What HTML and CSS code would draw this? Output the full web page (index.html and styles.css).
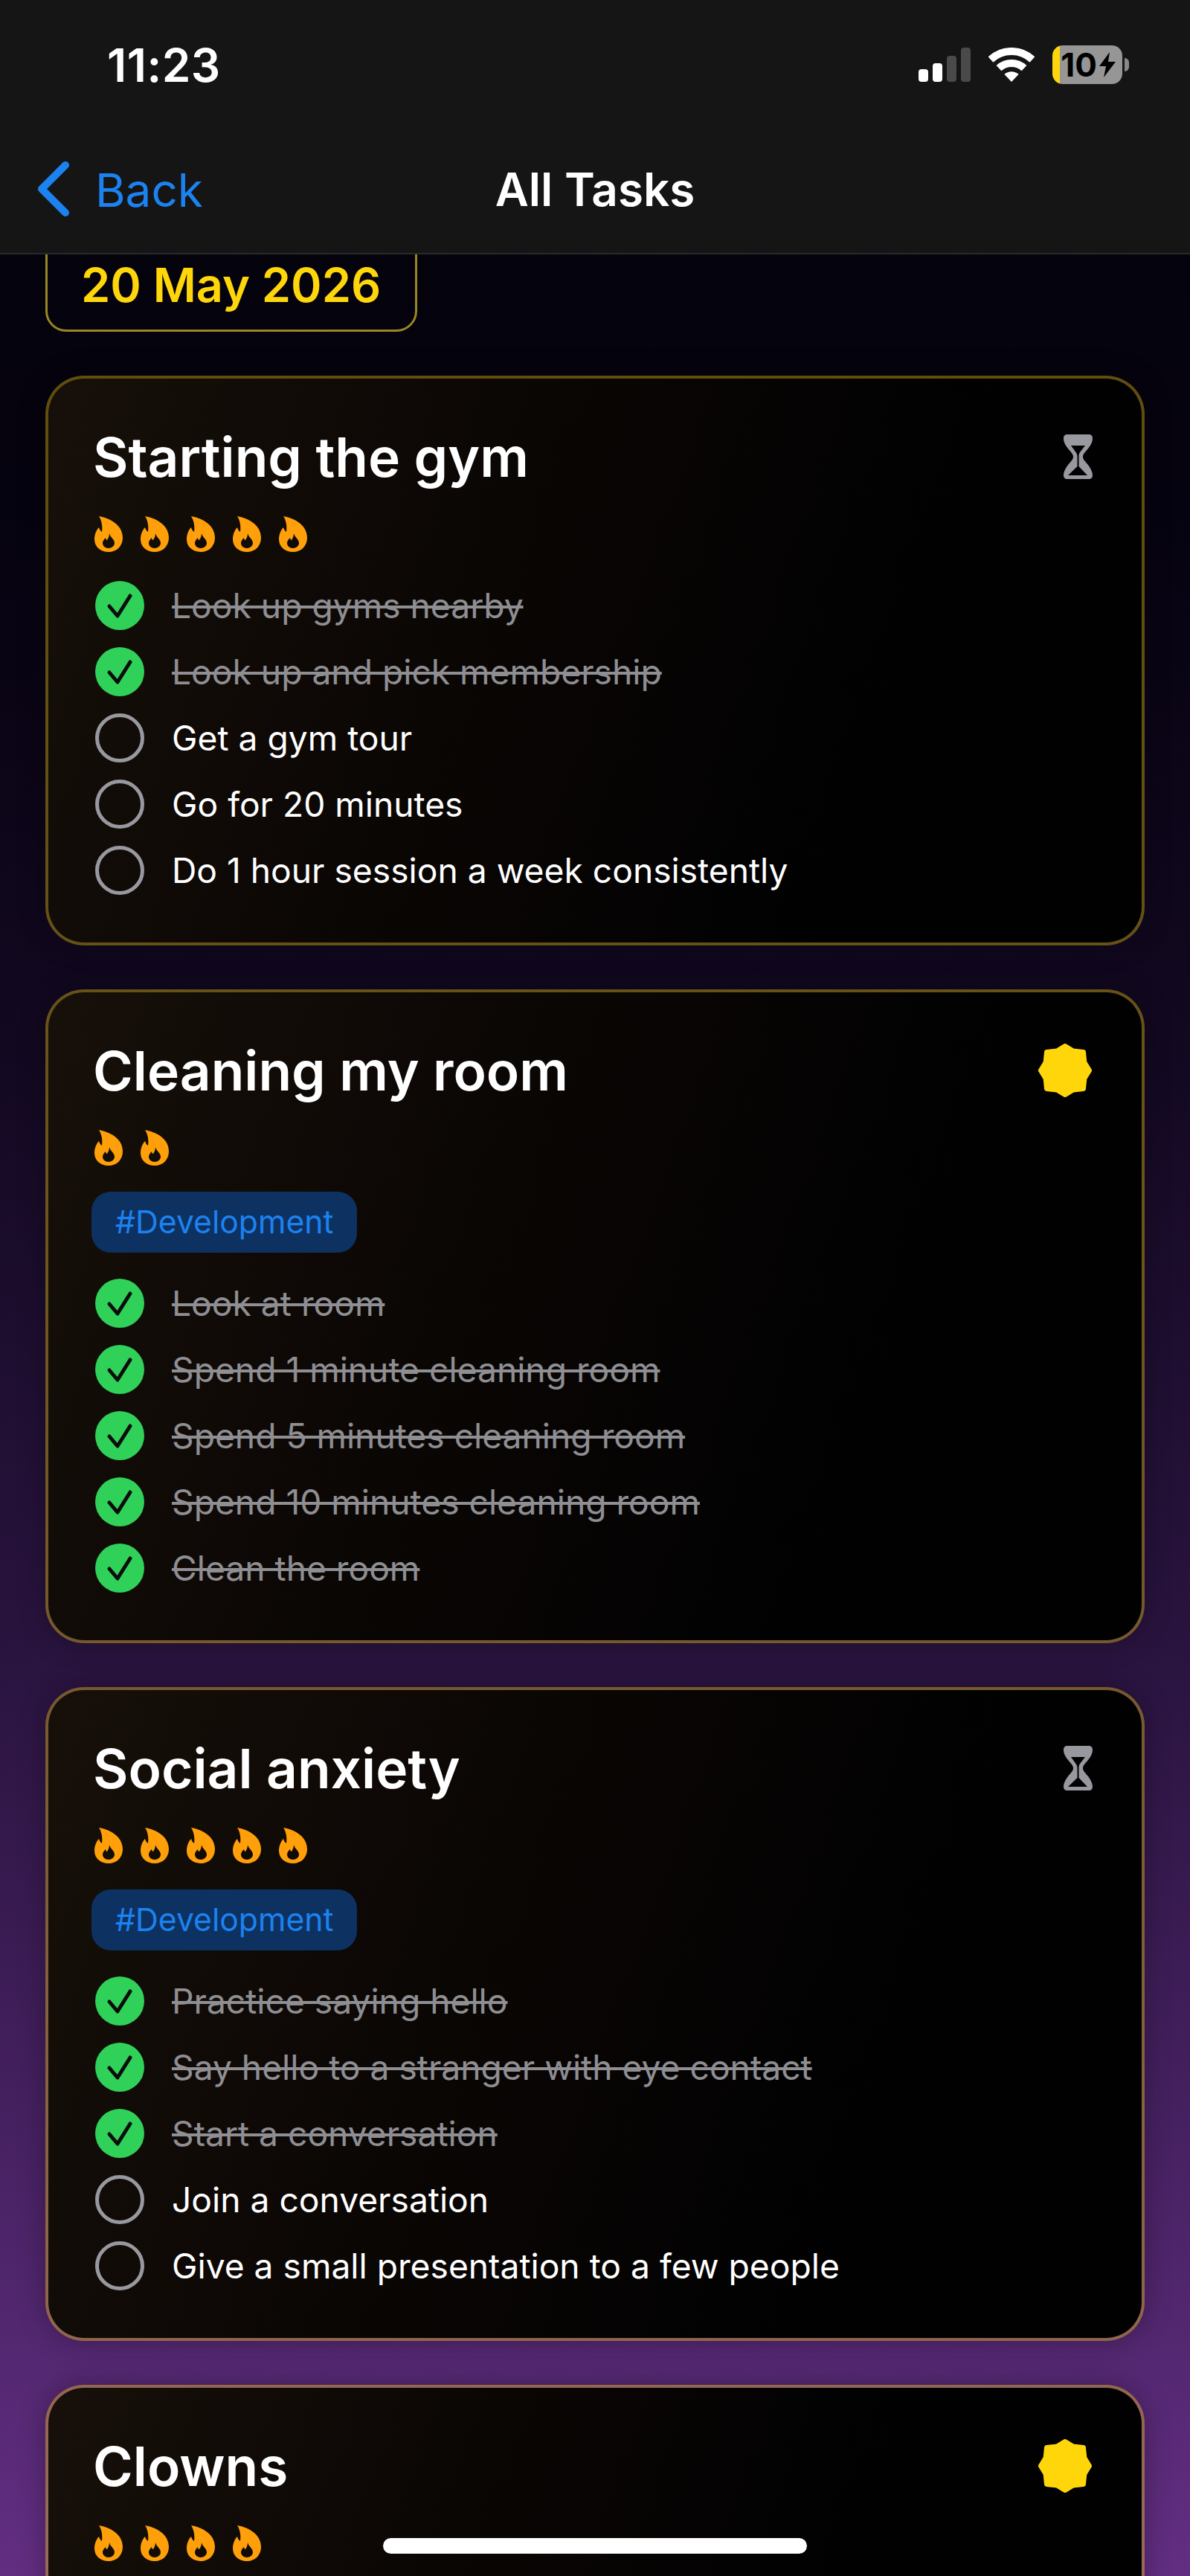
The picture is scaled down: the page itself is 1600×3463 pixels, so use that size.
FILE: index.html
```html
<!DOCTYPE html>
<html lang="en">
<head>
  <meta charset="UTF-8">
  <title>All Tasks</title>
  <link rel="stylesheet" href="styles.css">
</head>
<body>
  <svg class="defs" width="0" height="0">
    <symbol id="flame" viewBox="0 0 38 48">
      <path fill-rule="evenodd" d="M6 0C18 2 38 10 38 29C38 40 30 48 19 48C8 48 0 41 0 31C0 24 3 18 6 15C7 18 8 20 10 21C11 14 10 6 6 0ZM20 23C20 27 18.500 30 17 32C16 32 15 31 15 29C13 31 11 33 11 36C11 40 14.500 43 19 43C23 43 27 40 27 36C27 31 21 28 20 23Z"/>
    </symbol>
    <symbol id="hourglass" viewBox="0 0 39 60">
      <path fill-rule="evenodd" d="M5 0H34C37 0 39 2 39 5C39 11 36 15 33 19C30 23 26 26 26 30C26 34 30 37 33 41C36 45 39 50 39 55C39 58 37 60 34 60H5C2 60 0 58 0 55C0 50 3 45 6 41C9 37 13 34 13 30C13 26 9 23 6 19C3 15 0 11 0 5C0 2 2 0 5 0ZM10 15H29L22 24C20.500 26 20.500 28 20.500 30V43L32 55H6L18.500 43V30C18.500 28 18 26 16.500 24Z"/>
    </symbol>
    <symbol id="badge" viewBox="0 0 72 72">
      <polygon stroke-width="7" stroke-linejoin="round" points="36,3.500 46.700,10.100 60.500,11.500 61.900,25.300 68.500,36 61.900,46.700 60.500,60.500 46.700,61.900 36,68.500 25.300,61.900 11.500,60.500 10.100,46.700 3.500,36 10.100,25.300 11.500,11.500 25.300,10.100"/>
    </symbol>
    <symbol id="check" viewBox="0 0 66 66">
      <circle cx="33" cy="33" r="33" fill="#30d158"/>
      <path d="M19 34L30 47L47 20" fill="none" stroke="#0c0c0c" stroke-width="5" stroke-linecap="round" stroke-linejoin="round"/>
    </symbol>
    <symbol id="open" viewBox="0 0 66 66">
      <circle cx="33" cy="33" r="30.500" fill="none" stroke="#98989f" stroke-width="5"/>
    </symbol>
  </svg>

  <header class="top">
    <div class="status">
      <span class="time">11:23</span>
      <div class="status-icons">
        <div class="signal">
          <i class="bar b1"></i>
          <i class="bar b2"></i>
          <i class="bar b3 off"></i>
          <i class="bar b4 off"></i>
        </div>
        <svg class="wifi" width="62" height="46" viewBox="0 0 62 46">
          <path d="M3 16A41 41 0 0 1 59 16M14 27.700A25 25 0 0 1 48 27.700" fill="none" stroke="#fff" stroke-width="10"/>
          <path d="M31 46L21.500 36A14 14 0 0 1 40.500 36Z" fill="#fff"/>
        </svg>
        <div class="battery">
          <div class="battery-body">
            <span>10</span>
            <svg width="24" height="34" viewBox="0 0 24 34">
              <path d="M15 0L1 19H10L7 34L23 13H13Z" fill="#000"/>
            </svg>
          </div>
          <i class="battery-nub"></i>
        </div>
      </div>
    </div>
    <nav class="nav">
      <a class="back">
        <svg width="44" height="74" viewBox="0 0 44 74">
          <path d="M38 5L6 37L38 69" fill="none" stroke="#1c82f0" stroke-width="10" stroke-linecap="round" stroke-linejoin="round"/>
        </svg>
        <span class="back-label">Back</span>
      </a>
      <h1>All Tasks</h1>
    </nav>
  </header>

  <main class="list">
    <div class="date">20 May 2026</div>

    <section class="card">
      <div class="card-head">
        <h2>Starting the gym</h2>
        <svg class="hourglass"><use href="#hourglass"/></svg>
      </div>
      <div class="flames">
        <svg><use href="#flame"/></svg>
        <svg><use href="#flame"/></svg>
        <svg><use href="#flame"/></svg>
        <svg><use href="#flame"/></svg>
        <svg><use href="#flame"/></svg>
      </div>
      <ul class="steps">
        <li class="done"><svg><use href="#check"/></svg><span>Look up gyms nearby</span></li>
        <li class="done"><svg><use href="#check"/></svg><span>Look up and pick membership</span></li>
        <li><svg><use href="#open"/></svg><span>Get a gym tour</span></li>
        <li><svg><use href="#open"/></svg><span>Go for 20 minutes</span></li>
        <li><svg><use href="#open"/></svg><span>Do 1 hour session a week consistently</span></li>
      </ul>
    </section>

    <section class="card">
      <div class="card-head">
        <h2>Cleaning my room</h2>
        <svg class="badge"><use href="#badge"/></svg>
      </div>
      <div class="flames">
        <svg><use href="#flame"/></svg>
        <svg><use href="#flame"/></svg>
      </div>
      <span class="tag">#Development</span>
      <ul class="steps">
        <li class="done"><svg><use href="#check"/></svg><span>Look at room</span></li>
        <li class="done"><svg><use href="#check"/></svg><span>Spend 1 minute cleaning room</span></li>
        <li class="done"><svg><use href="#check"/></svg><span>Spend 5 minutes cleaning room</span></li>
        <li class="done"><svg><use href="#check"/></svg><span>Spend 10 minutes cleaning room</span></li>
        <li class="done"><svg><use href="#check"/></svg><span>Clean the room</span></li>
      </ul>
    </section>

    <section class="card">
      <div class="card-head">
        <h2>Social anxiety</h2>
        <svg class="hourglass"><use href="#hourglass"/></svg>
      </div>
      <div class="flames">
        <svg><use href="#flame"/></svg>
        <svg><use href="#flame"/></svg>
        <svg><use href="#flame"/></svg>
        <svg><use href="#flame"/></svg>
        <svg><use href="#flame"/></svg>
      </div>
      <span class="tag">#Development</span>
      <ul class="steps">
        <li class="done"><svg><use href="#check"/></svg><span>Practice saying hello</span></li>
        <li class="done"><svg><use href="#check"/></svg><span>Say hello to a stranger with eye contact</span></li>
        <li class="done"><svg><use href="#check"/></svg><span>Start a conversation</span></li>
        <li><svg><use href="#open"/></svg><span>Join a conversation</span></li>
        <li><svg><use href="#open"/></svg><span>Give a small presentation to a few people</span></li>
      </ul>
    </section>

    <section class="card">
      <div class="card-head">
        <h2>Clowns</h2>
        <svg class="badge"><use href="#badge"/></svg>
      </div>
      <div class="flames">
        <svg><use href="#flame"/></svg>
        <svg><use href="#flame"/></svg>
        <svg><use href="#flame"/></svg>
        <svg><use href="#flame"/></svg>
      </div>
    </section>
  </main>

  <div class="home-bar"></div>
</body>
</html>
```

FILE: styles.css
```css
* {
  margin: 0;
  padding: 0;
  box-sizing: border-box;
}

body {
  position: relative;
  width: 1600px;
  height: 3463px;
  overflow: hidden;
  font-family: Inter, "Liberation Sans", sans-serif;
  color: #fff;
  background: linear-gradient(180deg, #030208 0%, #060310 20%, #120820 40%, #2a1440 65%, #622e82 100%);
}

.defs {
  position: absolute;
}

/* top bar */
.top {
  position: relative;
  z-index: 2;
  height: 342px;
  background-color: #151515;
  border-bottom: 2px solid #2a2a2a;
}

.status {
  display: flex;
  justify-content: space-between;
  align-items: center;
  height: 172px;
  padding: 2px 82px 0 144px;
}

.time {
  font-size: 62px;
  font-weight: 600;
  letter-spacing: 0.5px;
}

.status-icons {
  display: flex;
  align-items: center;
  gap: 24px;
}

.signal {
  display: flex;
  align-items: flex-end;
  gap: 6px;
  height: 46px;
}

.bar {
  width: 13px;
  border-radius: 4px;
  background-color: #fff;
}

.bar.off {
  background-color: #4a4a4a;
}

.b1 { height: 17px; }
.b2 { height: 25px; }
.b3 { height: 35px; }
.b4 { height: 46px; }

.battery {
  display: flex;
  align-items: center;
  gap: 3px;
}

.battery-body {
  display: flex;
  align-items: center;
  justify-content: flex-end;
  gap: 2px;
  width: 94px;
  height: 52px;
  padding-right: 8px;
  border-radius: 14px;
  color: #000;
  font-size: 44px;
  font-weight: 700;
  background: linear-gradient(90deg, #ffd60a 10px, #969696 10px);
}

.battery-nub {
  width: 6px;
  height: 18px;
  border-radius: 0 6px 6px 0;
  background-color: #8a8a8a;
}

.nav {
  position: relative;
  display: flex;
  justify-content: center;
  align-items: center;
  height: 168px;
  padding-bottom: 4px;
}

.back {
  position: absolute;
  left: 50px;
  top: 42px;
  display: flex;
  align-items: center;
  gap: 34px;
  color: #1c82f0;
  font-size: 62px;
}

.back-label {
  padding-top: 4px;
}

.nav h1 {
  font-size: 62px;
  font-weight: 600;
}

/* task list */
.list {
  display: flex;
  flex-direction: column;
  gap: 59px;
  padding: 0 61px;
}

.date {
  align-self: flex-start;
  display: flex;
  align-items: flex-end;
  width: 500px;
  height: 134px;
  margin-top: -30px;
  padding: 0 0 22px 45px;
  border: 3px solid #9a8622;
  border-radius: 28px;
  color: #ffd60a;
  font-size: 63px;
  font-weight: 600;
}

.card {
  display: flex;
  flex-direction: column;
  align-items: flex-start;
  flex-shrink: 0;
  padding: 65px 61px 64px;
  border: 4px solid rgba(255, 214, 10, 0.36);
  border-radius: 52px;
  background: linear-gradient(110deg, #17100a 0%, #0a0604 40%, #010102 75%) padding-box;
  box-shadow: 0 0 36px rgba(0, 0, 0, 0.3);
}

.card-head {
  display: flex;
  justify-content: space-between;
  align-items: center;
  width: 100%;
  height: 80px;
}

.card-head h2 {
  font-size: 73px;
  font-weight: 600;
  margin-left: -1px;
}

.hourglass {
  width: 39px;
  height: 60px;
  margin-right: 5px;
  fill: #98989f;
}

.badge {
  width: 72px;
  height: 72px;
  margin-right: 6px;
  fill: #ffd60a;
  stroke: #ffd60a;
}

.flames {
  display: flex;
  gap: 24px;
  margin: 40px 0 0 1px;
}

.flames svg {
  width: 38px;
  height: 48px;
  fill: #ff9f0a;
}

.tag {
  margin: 35px 0 -4px -3px;
  padding: 0 32px;
  height: 82px;
  border-radius: 26px;
  color: #1c82f0;
  font-size: 42.7px;
  line-height: 82px;
  background-color: #0d3160;
}

.steps {
  display: flex;
  flex-direction: column;
  gap: 23px;
  margin: 39px 0 0 2px;
  list-style: none;
}

.steps li {
  display: flex;
  align-items: center;
  gap: 37px;
  height: 66px;
  font-size: 46.2px;
}

.steps svg {
  width: 66px;
  height: 66px;
  flex-shrink: 0;
}

.done span {
  color: #8e8e93;
  text-decoration: line-through;
  text-decoration-thickness: 4px;
}

.home-bar {
  position: absolute;
  left: 515px;
  top: 3412px;
  width: 570px;
  height: 21px;
  border-radius: 11px;
  background-color: #fff;
}
```
